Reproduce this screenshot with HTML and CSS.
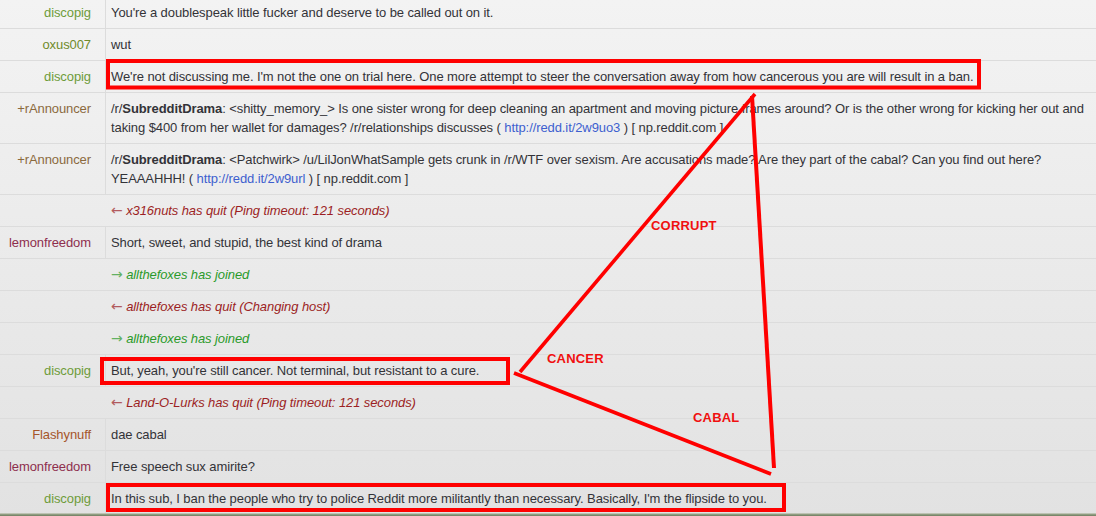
FILE: index.html
```html
<!DOCTYPE html>
<html>
<head>
<meta charset="utf-8">
<link rel="stylesheet" href="styles.css">
</head>
<body>
<div class="log">
  <div class="rows">
    <div class="row"><div class="nick n-disco">discopig</div><div class="msg">You're a doublespeak little fucker and deserve to be called out on it.</div></div>
    <div class="row"><div class="nick n-oxus">oxus007</div><div class="msg">wut</div></div>
    <div class="row"><div class="nick n-disco">discopig</div><div class="msg">We're not discussing me. I'm not the one on trial here. One more attempt to steer the conversation away from how cancerous you are will result in a ban.</div></div>
    <div class="row"><div class="nick n-ann">+rAnnouncer</div><div class="msg">/r/<b>SubredditDrama</b>: &lt;shitty_memory_&gt; Is one sister wrong for deep cleaning an apartment and moving picture frames around? Or is the other wrong for kicking her out and taking $400 from her wallet for damages? /r/relationships discusses ( <a class="link">http://redd.it/2w9uo3</a> ) [ np.reddit.com ]</div></div>
    <div class="row"><div class="nick n-ann">+rAnnouncer</div><div class="msg">/r/<b>SubredditDrama</b>: &lt;Patchwirk&gt; /u/LilJonWhatSample gets crunk in /r/WTF over sexism. Are accusations made? Are they part of the cabal? Can you find out here? YEAAAHHH! ( <a class="link">http://redd.it/2w9url</a> ) [ np.reddit.com ]</div></div>
    <div class="row"><div class="nick empty"></div><div class="msg quit"><span class="arrow">←</span> x316nuts has quit (Ping timeout: 121 seconds)</div></div>
    <div class="row"><div class="nick n-lemon">lemonfreedom</div><div class="msg">Short, sweet, and stupid, the best kind of drama</div></div>
    <div class="row"><div class="nick empty"></div><div class="msg join"><span class="arrow">→</span> allthefoxes has joined</div></div>
    <div class="row"><div class="nick empty"></div><div class="msg quit"><span class="arrow">←</span> allthefoxes has quit (Changing host)</div></div>
    <div class="row"><div class="nick empty"></div><div class="msg join"><span class="arrow">→</span> allthefoxes has joined</div></div>
    <div class="row"><div class="nick n-disco">discopig</div><div class="msg">But, yeah, you're still cancer. Not terminal, but resistant to a cure.</div></div>
    <div class="row"><div class="nick empty"></div><div class="msg quit"><span class="arrow">←</span> Land-O-Lurks has quit (Ping timeout: 121 seconds)</div></div>
    <div class="row"><div class="nick n-flash">Flashynuff</div><div class="msg">dae cabal</div></div>
    <div class="row"><div class="nick n-lemon">lemonfreedom</div><div class="msg">Free speech sux amirite?</div></div>
    <div class="row"><div class="nick n-disco">discopig</div><div class="msg">In this sub, I ban the people who try to police Reddit more militantly than necessary. Basically, I'm the flipside to you.</div></div>
  </div>
  <div class="edge"></div>
  <svg class="marks" width="1096" height="516" viewBox="0 0 1096 516">
    <g fill="none" stroke="#ff0000" stroke-width="4">
      <rect x="108" y="61" width="871" height="26.5"/>
      <rect x="102" y="359" width="406" height="24"/>
      <rect x="108" y="485" width="676" height="25"/>
      <line x1="520" y1="372" x2="755" y2="94" stroke-width="3.6"/>
      <line x1="752" y1="96" x2="774" y2="468"/>
      <line x1="514" y1="373" x2="771" y2="474" stroke-width="3.6"/>
    </g>
    <g class="label">
      <text x="651" y="230">CORRUPT</text>
      <text x="547" y="363">CANCER</text>
      <text x="693" y="422">CABAL</text>
    </g>
  </svg>
</div>
</body>
</html>
```

FILE: styles.css
```css
html, body {
  margin: 0;
  padding: 0;
}

body {
  font: 13px/19px "Liberation Sans", Arial, sans-serif;
  color: #333338;
  letter-spacing: -0.09px;
}

.log {
  position: relative;
  width: 1096px;
  height: 516px;
  overflow: hidden;
  display: flex;
  flex-direction: column;
  background: linear-gradient(#f3f3f3, #e2e2e2);
}

.rows {
  flex: 1;
  overflow: hidden;
  margin-top: -3px;
}

.row {
  display: flex;
  border-bottom: 1px solid #dcdcdc;
}

.nick {
  flex: none;
  width: 91px;
  padding: 6px 14px 6px 0;
  text-align: right;
  border-right: 1px solid #dcdcdc;
  white-space: nowrap;
}

.nick.empty {
  border-right-color: transparent;
}

.msg {
  flex: 1;
  padding: 6px 0 6px 5px;
}

.msg b {
  font-weight: bold;
}

.link {
  color: #3e5fcf;
  text-decoration: none;
}

.quit {
  color: #9c1f24;
  font-style: italic;
}

.join {
  color: #2a9a2a;
  font-style: italic;
}

.arrow {
  font-family: "DejaVu Sans", sans-serif;
  font-size: 14px;
  line-height: 0;
  opacity: 0.7;
}

.n-disco { color: #6e9c3a; }
.n-oxus { color: #6f8b2a; }
.n-ann { color: #8b6a3e; }
.n-lemon { color: #8e2f4e; }
.n-flash { color: #a5562a; }

.edge {
  flex: none;
  height: 3px;
  background: linear-gradient(#d4d6cc, #8e9c80, #6f7d60);
}

.marks {
  position: absolute;
  left: 0;
  top: 0;
  pointer-events: none;
}

.label text {
  font: bold 13px "Liberation Sans", Arial, sans-serif;
  letter-spacing: 0.2px;
  fill: #f01010;
}
```
